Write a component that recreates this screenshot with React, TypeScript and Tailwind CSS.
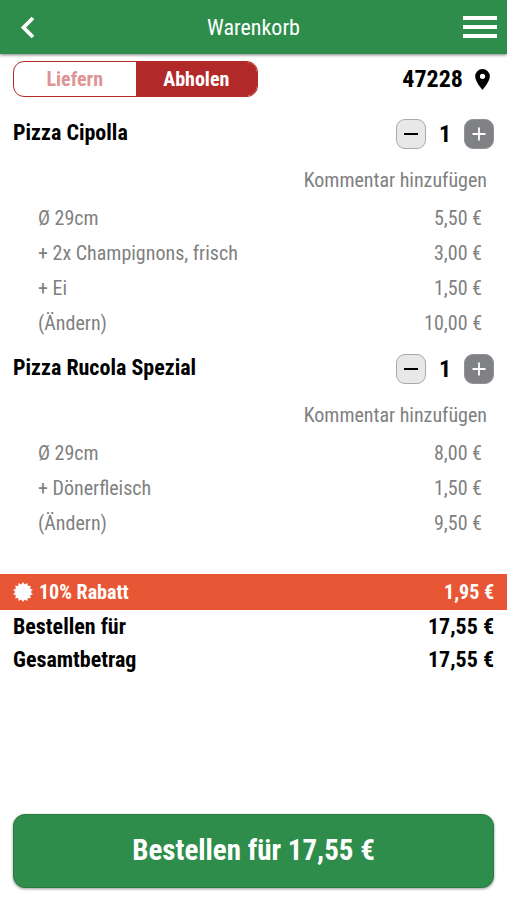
type Option = {
  label: string
  price: string
}

type Item = {
  name: string
  quantity: number
  options: Option[]
  total: string
}

const items: Item[] = [
  {
    name: "Pizza Cipolla",
    quantity: 1,
    options: [
      { label: "Ø 29cm", price: "5,50 €" },
      { label: "+ 2x Champignons, frisch", price: "3,00 €" },
      { label: "+ Ei", price: "1,50 €" },
    ],
    total: "10,00 €",
  },
  {
    name: "Pizza Rucola Spezial",
    quantity: 1,
    options: [
      { label: "Ø 29cm", price: "8,00 €" },
      { label: "+ Dönerfleisch", price: "1,50 €" },
    ],
    total: "9,50 €",
  },
]

function Header() {
  return (
    <header className="relative flex h-[54px] items-center justify-between bg-[#2e8d4b] pl-[19px] pr-[10px] text-white shadow-[0_1px_3px_rgba(0,0,0,0.5)]">
      <button type="button" aria-label="Zurück" className="flex w-[25px]">
        <svg width="18" height="24" viewBox="0 0 18 24" fill="none" stroke="currentColor" strokeWidth="3.8">
          <path d="M14 3 L4.500 12.500 L14 22" />
        </svg>
      </button>
      <h1 className="text-[22px]">Warenkorb</h1>
      <button type="button" aria-label="Menü">
        <svg width="34" height="24" viewBox="0 0 34 24" fill="currentColor">
          <path d="M0 1h34v4H0zM0 10h34v4H0zM0 19h34v4H0z" />
        </svg>
      </button>
    </header>
  )
}

function DeliveryBar() {
  return (
    <div className="flex items-center justify-between px-[13px] pt-[7px]">
      <div className="flex h-9 w-[245px] overflow-hidden rounded-[11px] border border-[#b12a29] text-[20px] font-bold">
        <button type="button" aria-pressed={false} className="flex-1 text-[#dc9594]">
          Liefern
        </button>
        <button type="button" aria-pressed={true} className="flex-1 bg-[#b12a29] text-white">
          Abholen
        </button>
      </div>
      <button type="button" className="flex items-center gap-3 pr-1 text-[24px] leading-9 font-bold">
        47228
        <svg width="15" height="21" viewBox="0 0 14 20" fill="currentColor">
          <path fillRule="evenodd" d="M7 0a7 7 0 0 0-7 7c0 5.250 7 13 7 13s7-7.750 7-13a7 7 0 0 0-7-7zm0 9.500a2.500 2.500 0 1 1 0-5 2.500 2.500 0 0 1 0 5z" />
        </svg>
      </button>
    </div>
  )
}

function CartItem({ item }: { item: Item }) {
  return (
    <li className="pb-[3px]">
      <div className="flex h-[52px] items-center justify-between px-[13px]">
        <h2 className="pb-1 text-[22px] font-bold">{item.name}</h2>
        <div className="flex items-center">
          <button
            type="button"
            aria-label={`${item.name} verringern`}
            className="flex size-[30px] items-center justify-center rounded-[9px] border border-[#a9a9a9] bg-[#e8e8e8]"
          >
            <svg width="14" height="14" viewBox="0 0 14 14" stroke="currentColor" strokeWidth="2">
              <path d="M0 7h14" />
            </svg>
          </button>
          <span className="w-[38px] text-center text-[24px] font-bold">{item.quantity}</span>
          <button
            type="button"
            aria-label={`${item.name} erhöhen`}
            className="flex size-[30px] items-center justify-center rounded-[9px] border border-[#929396] bg-[#808184] text-white"
          >
            <svg width="14" height="14" viewBox="0 0 14 14" stroke="currentColor" strokeWidth="1.8">
              <path d="M0.500 7h13M7 0.500v13" />
            </svg>
          </button>
        </div>
      </div>
      <div className="flex h-10 items-center justify-end pr-5 text-[20px] text-[#808080]">
        <button type="button">Kommentar hinzufügen</button>
      </div>
      <ul className="pl-[38px] pr-[25px] text-[20px] text-[#808080]">
        {item.options.map((option) => (
          <li key={option.label} className="flex h-[35px] items-center justify-between">
            <span>{option.label}</span>
            <span>{option.price}</span>
          </li>
        ))}
        <li className="flex h-[35px] items-center justify-between">
          <button type="button">(Ändern)</button>
          <span>{item.total}</span>
        </li>
      </ul>
    </li>
  )
}

function SealIcon() {
  // 14-pointed star, alternating outer and inner radius
  const points = Array.from({ length: 28 }, (_, i) => {
    const r = i % 2 === 0 ? 10 : 7.8
    const a = (i * Math.PI) / 14
    return `${(10 + r * Math.sin(a)).toFixed(2)},${(10 - r * Math.cos(a)).toFixed(2)}`
  }).join(" ")

  return (
    <svg width="20" height="20" viewBox="0 0 20 20" fill="currentColor">
      <polygon points={points} />
    </svg>
  )
}

function Summary() {
  return (
    <section className="mt-[31px] font-bold">
      <div className="flex h-9 items-center justify-between bg-[#e95635] px-[13px] text-[20px] text-white">
        <span className="flex items-center gap-1.5">
          <SealIcon />
          10% Rabatt
        </span>
        <span>1,95 €</span>
      </div>
      <div className="flex h-[33px] items-center justify-between px-[13px] text-[22px]">
        <span>Bestellen für</span>
        <span>17,55 €</span>
      </div>
      <div className="flex h-[33px] items-center justify-between px-[13px] text-[22px]">
        <span>Gesamtbetrag</span>
        <span>17,55 €</span>
      </div>
    </section>
  )
}

export default function App() {
  return (
    <div className="flex min-h-screen flex-col bg-white font-['Roboto_Condensed',Roboto,sans-serif] text-black">
      <Header />
      <main className="flex flex-1 flex-col">
        <DeliveryBar />
        <ul className="mt-[11px]">
          {items.map((item) => (
            <CartItem key={item.name} item={item} />
          ))}
        </ul>
        <Summary />
        <div className="mt-auto px-[13px] pt-6 pb-3">
          <button
            type="button"
            className="h-[74px] w-full rounded-xl border border-[#287a41] bg-[#2e8d4b] text-[29px] font-bold text-white shadow-[0_1px_3px_rgba(0,0,0,0.4)]"
          >
            Bestellen für 17,55 €
          </button>
        </div>
      </main>
    </div>
  )
}
